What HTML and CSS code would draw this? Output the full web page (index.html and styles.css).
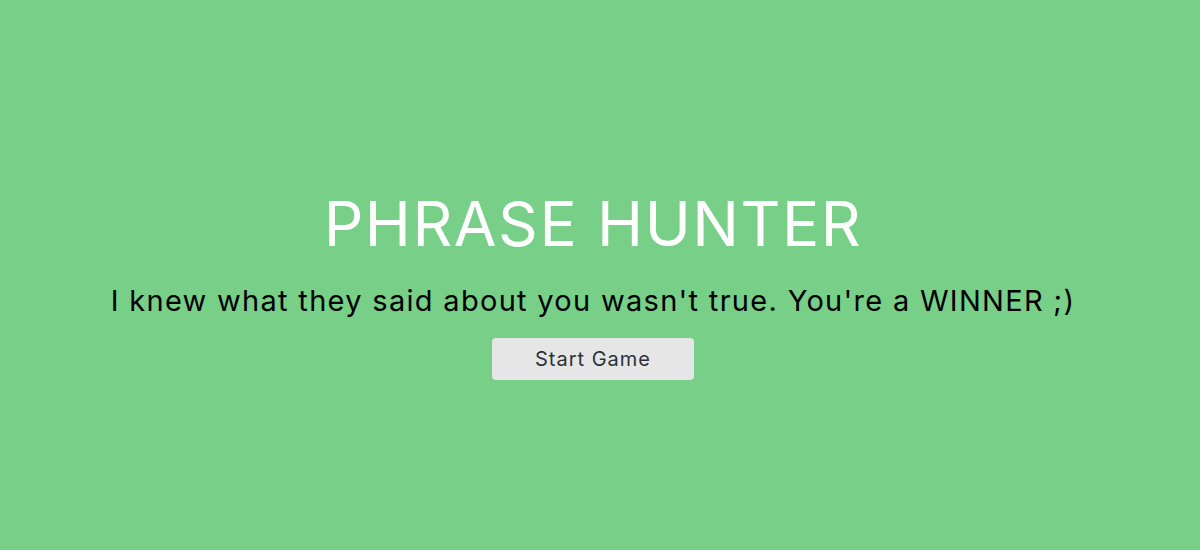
FILE: index.html
```html
<!DOCTYPE html>
<html lang="en">
<head>
<meta charset="utf-8">
<title>Phrase Hunter</title>
<link rel="stylesheet" href="styles.css">
</head>
<body>
<div class="overlay win">
  <h2 class="title">PHRASE HUNTER</h2>
  <h1 class="game-over-message">I knew what they said about you wasn't true. You're a WINNER ;)</h1>
  <button class="btn-reset" type="button">Start Game</button>
</div>
</body>
</html>
```

FILE: styles.css
```css
html, body {
  margin: 0;
  padding: 0;
}
body {
  background: #78cf87;
  font-family: "Inter", "Open Sans", sans-serif;
}
.overlay {
  box-sizing: border-box;
  height: 550px;
  display: flex;
  flex-direction: column;
  align-items: center;
  padding-top: 186px;
  padding-right: 14px;
}
.title {
  margin: 0;
  color: #ffffff;
  font-weight: 400;
  font-size: 62px;
  line-height: 76px;
  letter-spacing: 1.5px;
}
.game-over-message {
  margin: 0;
  color: #000000;
  font-weight: 400;
  font-size: 29px;
  line-height: 40px;
  margin-top: 19px;
  letter-spacing: 1.3px;
}
.btn-reset {
  margin-top: 17px;
  width: 202px;
  height: 42px;
  border: none;
  border-radius: 4px;
  background: #e6e6e6;
  color: #2c3238;
  font-family: "Inter", "Open Sans", sans-serif;
  font-size: 20px;
  letter-spacing: 1px;
  padding: 0;
}
```
